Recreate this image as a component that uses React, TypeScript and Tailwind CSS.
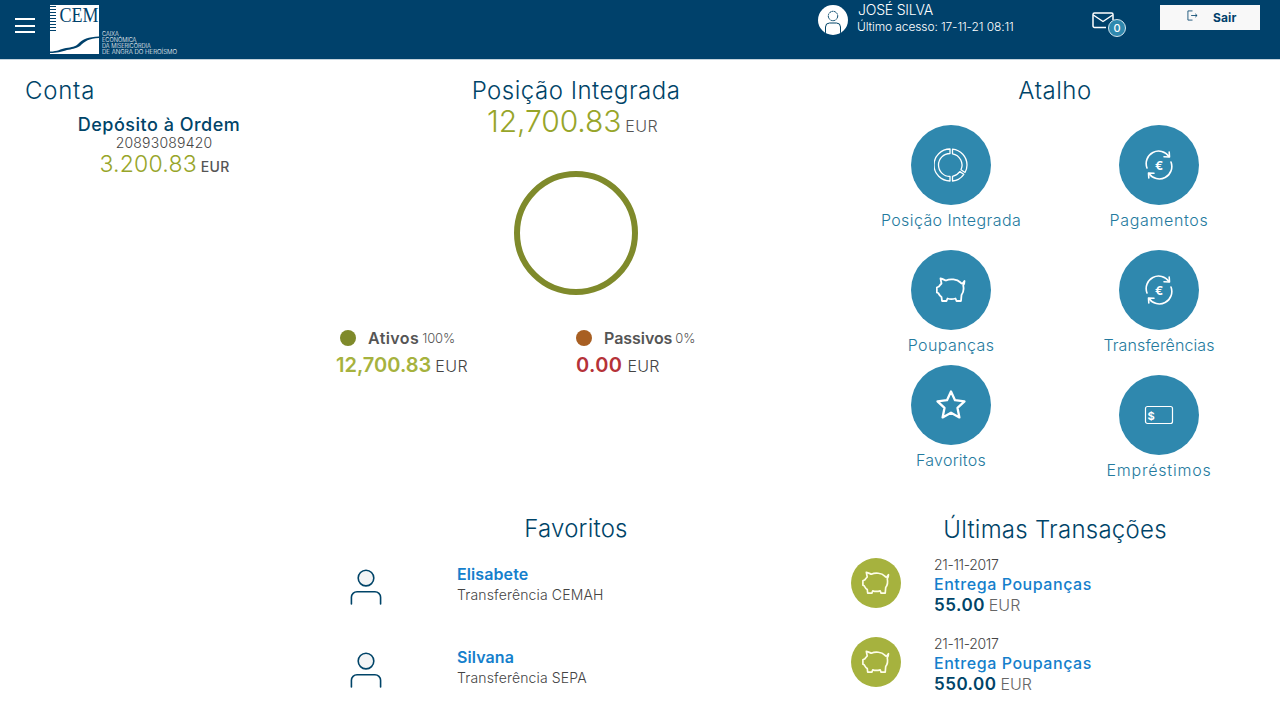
import React from "react";

const Pig = ({ className = "" }: { className?: string }) => (
  <svg viewBox="0 0 30 26" className={className} fill="none" stroke="currentColor" strokeWidth="1.8" strokeLinejoin="round" strokeLinecap="round">
    <path d="M4.5 1.5 C7 2 8.5 3 10 3.5 C14 1.5 21 2 24.5 5.5 C25.5 6.5 26 7 26.5 6.5 C27.5 5.5 28 5 28.5 4 C28.5 6 28 7.5 27.2 8.5 C28 12 27 16 25.5 18 L25 24 L20.5 24 L19.5 21.5 C16.5 22.3 13.5 22.2 11.5 21.5 L10.5 24 L6 24 L5.5 20 C4 19 3 17.5 2.2 16 L0.8 15.5 L0.8 10.5 L3 9.5 C3.6 8.5 4.5 7.5 5.5 6.5 Z" />
  </svg>
);

const Swap = () => (
  <svg viewBox="0 0 30 30" className="w-[30px] h-[30px]" fill="none" stroke="white" strokeWidth="1.6" strokeLinecap="round" strokeLinejoin="round">
    <path d="M3 18 A12.5 12.5 0 0 1 25 6.5" />
    <path d="M20 6.8 L25.5 7 L25.2 2" />
    <path d="M27 12 A12.5 12.5 0 0 1 5 23.5" />
    <path d="M10 23.2 L4.5 23 L4.8 28" />
    <text x="15" y="19.5" textAnchor="middle" fontSize="12" fontWeight="700" fill="white" stroke="none" fontFamily="Inter, sans-serif">€</text>
  </svg>
);

const Donut = () => (
  <svg viewBox="0 0 34 34" className="w-[34px] h-[34px]" fill="none" stroke="white" strokeWidth="1.3" strokeLinejoin="round">
    <path d="M16 1 A16 16 0 0 0 16 33 L16 28.5 A11.5 11.5 0 0 1 16 5.5 Z" />
    <path d="M18.5 1.2 A16 16 0 0 1 33 17 C33 20 32.2 22.5 31 24.5 L27 21.8 A11.5 11.5 0 0 0 18.5 5.8 Z" />
    <path d="M29.8 26.3 A16 16 0 0 1 18.5 33 L18.5 28.3 A11.5 11.5 0 0 0 25.8 23.6 Z" />
  </svg>
);

const Star = () => (
  <svg viewBox="0 0 32 32" className="w-[32px] h-[32px]" fill="none" stroke="white" strokeWidth="2.3" strokeLinejoin="round">
    <path d="M16 2.5 L20 11.2 L29.5 12.4 L22.5 18.9 L24.4 28.4 L16 23.7 L7.6 28.4 L9.5 18.9 L2.5 12.4 L12 11.2 Z" />
  </svg>
);

const Bill = () => (
  <svg viewBox="0 0 30 20" className="w-[30px] h-[20px]" fill="none" stroke="white" strokeWidth="1.2">
    <rect x="1.5" y="1.5" width="27" height="17" rx="2" />
    <text x="7" y="14.5" textAnchor="middle" fontSize="11" fontWeight="700" fill="white" stroke="none" fontFamily="Inter, sans-serif">$</text>
  </svg>
);

const Person = () => (
  <svg viewBox="0 0 34 38" className="w-[32px] h-[36px]" fill="none" stroke="#004468" strokeWidth="1.7">
    <circle cx="17" cy="9.5" r="8.3" fill="#f3f4f5" />
    <path d="M1.5 37 L1.5 30 A6 6 0 0 1 7.5 24 L26.5 24 A6 6 0 0 1 32.5 30 L32.5 37" strokeLinecap="round" />
  </svg>
);

const Shortcut = ({ label, icon, className = "", labelClass = "tracking-[0.4px]" }: { label: string; icon: React.ReactNode; className?: string; labelClass?: string }) => (
  <div className={`flex flex-col items-center ${className}`}>
    <div className="w-20 h-20 rounded-full bg-[#2f88ae] text-white flex items-center justify-center">{icon}</div>
    <div className={`mt-[5px] text-[16px] leading-[20px] font-light text-[#247a9e] whitespace-nowrap ${labelClass}`}>{label}</div>
  </div>
);

const Favorite = ({ name, kind, className = "" }: { name: string; kind: string; className?: string }) => (
  <div className={`flex items-start ${className}`}>
    <div className="ml-[30px] w-[32px] mt-[6px]"><Person /></div>
    <div className="ml-[75px]">
      <div className="text-[16px] leading-[22px] font-semibold text-[#157fcc] tracking-[0.1px]">{name}</div>
      <div className="text-[14px] leading-[20px] font-light text-[#444] tracking-[0.15px]">{kind}</div>
    </div>
  </div>
);

const Tx = ({ value, className = "" }: { value: string; className?: string }) => (
  <div className={`flex items-start ${className}`}>
    <div className="ml-[19px] mt-[5px] w-[50px] h-[50px] rounded-full bg-[#a6b23e] flex items-center justify-center text-[#fdfde8]">
      <Pig className="w-[28px] h-[24px]" />
    </div>
    <div className="ml-[33px] pt-[2px]">
      <div className="text-[14px] leading-[19px] font-light text-[#444] tracking-[-0.35px]">21-11-2017</div>
      <div className="text-[16px] leading-[20px] font-medium text-[#157fcc] tracking-[0.55px]">Entrega Poupanças</div>
      <div className="text-[17px] leading-[22px] text-[#666]"><span className="font-semibold text-[#004468] tracking-[0.5px]">{value}</span><span className="text-[16px] font-light ml-[4px]">EUR</span></div>
    </div>
  </div>
);

export default function App() {
  return (
    <div className="h-[727px] overflow-hidden bg-white font-['Inter',sans-serif] text-[#555]">
      <header className="h-[60px] bg-[#00416b] border-b border-[#c4d3dc] flex items-start text-white">
        <div className="ml-[15px] mt-[18px] w-5 flex flex-col gap-[4.5px]">
          <span className="h-[2px] bg-white" /><span className="h-[2px] bg-white" /><span className="h-[2px] bg-white" />
        </div>
        <svg viewBox="0 0 128 50" className="ml-[15px] mt-[5px] w-[128px] h-[50px]">
          <rect x="0" y="0" width="49" height="49" fill="white" />
          <path d="M0 1.5H6M0 4.5H6M0 7.5H6M0 10.5H6M0 13.5H6M0 16.5H6M0 19.5H6M0 22.5H6M0 25.5H6" stroke="#00416b" strokeWidth="1.2" />
          <text x="9.5" y="17" fontFamily="'Liberation Serif', serif" fontSize="20" fill="#00416b" textLength="39" lengthAdjust="spacingAndGlyphs">CEM</text>
          <path d="M0 46.5 C8 46.5 10 44 16 43 C22 42 25 42 28 39 C33 34 38 32 49 31.5 L49 33 C39 33.5 35 36 30 41 C25 44 22 44 17 45 C11 47 7 48 0 48 Z" fill="#00416b" />
          <g fill="white" fontFamily="Inter, sans-serif" fontSize="5.6" fontWeight="300">
            <text x="52" y="31">CAIXA</text>
            <text x="52" y="36.5">ECONÓMICA</text>
            <text x="52" y="42.5">DA MISERICÓRDIA</text>
            <text x="52" y="48.5" textLength="75" lengthAdjust="spacingAndGlyphs">DE ANGRA DO HEROÍSMO</text>
          </g>
        </svg>
        <div className="ml-[640px] mt-[5px] w-[30px] h-[30px] rounded-full bg-white overflow-hidden">
          <svg viewBox="0 0 30 30" className="w-[30px] h-[30px]" fill="none" stroke="#004468" strokeWidth="1">
            <circle cx="15" cy="11" r="4.7" strokeDasharray="2 0.5" />
            <path d="M7.5 30 L7.5 22 A4 4 0 0 1 11.5 18 L18.5 18 A4 4 0 0 1 22.5 22 L22.5 30" />
          </svg>
        </div>
        <div className="ml-[9px] w-[235px] leading-none">
          <div className="mt-[1px] ml-[1px] text-[14px] leading-[17px] font-light tracking-[-0.2px]">JOSÉ SILVA</div>
          <div className="text-[12px] leading-[17px] font-light tracking-[-0.12px]">Último acesso: 17-11-21 08:11</div>
        </div>
        <div className="relative mt-[12px] w-[22px] h-[17px]">
          <svg viewBox="0 0 22 17" className="w-[22px] h-[17px]" fill="none" stroke="white" strokeWidth="1.5" strokeLinejoin="round">
            <path d="M14 15.5 L2.5 15.5 A1.5 1.5 0 0 1 1 14 L1 2.5 A1.5 1.5 0 0 1 2.5 1 L19.5 1 A1.5 1.5 0 0 1 21 2.5 L21 8" />
            <path d="M1.3 3 L11 9.5 L20.7 3" />
          </svg>
          <div className="absolute left-[16px] top-[7px] w-[18px] h-[18px] rounded-full bg-[#2f88ae] border border-[#d5e6ee] text-[11px] leading-[16px] text-center font-medium">0</div>
        </div>
        <div className="ml-[46px] mt-[5px] w-[100px] h-[25px] bg-[#f8f8f8] flex items-center text-[#00416b]">
          <svg viewBox="0 0 12 12" className="ml-[27px] w-[11px] h-[11px] mb-[4px]" fill="none" stroke="#00416b" strokeWidth="0.9">
            <path d="M6 1 H1 V11 H6" /><path d="M4.5 6 H11 M9 4.2 L11 6 L9 7.8" />
          </svg>
          <span className="ml-[15px] text-[12px] font-bold tracking-[0.1px]">Sair</span>
        </div>
      </header>

      <main className="grid grid-cols-[320px_512px_448px] grid-rows-[456px_auto]">
        <section className="pl-[25px] pt-[17px]">
          <h2 className="text-[24px] leading-[28px] font-light text-[#004468] tracking-[0.75px]">Conta</h2>
          <div className="w-[268px] mt-[9px] text-center">
            <div className="text-[18px] leading-[21px] font-medium text-[#004468] tracking-[0.5px]">Depósito à Ordem</div>
            <div className="pl-[10px] text-[14px] leading-[16px] font-light text-[#444] tracking-[0.2px]">20893089420</div>
            <div className="pl-[11px] text-[23px] leading-[27px] font-light text-[#97a52a] tracking-[0.2px]">3.200.83<span className="ml-[4px] text-[14px] font-medium text-[#555] tracking-[0.3px]">EUR</span></div>
          </div>
        </section>

        <section className="pt-[17px]">
          <h2 className="text-center text-[24px] leading-[28px] font-light text-[#004468] tracking-[0.5px]">Posição Integrada</h2>
          <div className="pr-[7px] text-center mt-[-1px] text-[30px] leading-[34px] font-light text-[#97a52a] tracking-[-0.1px]">12,700.83<span className="ml-[4px] text-[16px] text-[#555] font-light tracking-[0.4px]">EUR</span></div>
          <div className="flex justify-center mt-[28px]">
            <svg viewBox="0 0 124 124" className="w-[124px] h-[124px]">
              <circle cx="62" cy="62" r="59" fill="none" stroke="#7f8a2b" strokeWidth="6" />
            </svg>
          </div>
          <div className="grid grid-cols-[240px_240px] ml-[16px] mt-[31px]">
            <div>
              <div className="flex items-center ml-[4px] h-[24px]">
                <span className="w-4 h-4 rounded-full bg-[#7f8a2b]" />
                <span className="ml-3 text-[16px] font-semibold text-[#555] tracking-[0.4px]">Ativos</span>
                <span className="ml-[3px] text-[13px] font-light text-[#555] tracking-[-0.1px] mt-[2px]">100%</span>
              </div>
              <div className="mt-[2px] text-[20px] leading-[26px] font-semibold text-[#a6b23e]">12,700.83<span className="ml-[4px] text-[16px] font-light text-[#444] tracking-[0.5px]">EUR</span></div>
            </div>
            <div>
              <div className="flex items-center h-[24px]">
                <span className="w-4 h-4 rounded-full bg-[#a85f22]" />
                <span className="ml-3 text-[16px] font-semibold text-[#555] tracking-[-0.05px]">Passivos</span>
                <span className="ml-[3px] text-[13px] font-light text-[#555] tracking-[-0.2px] mt-[2px]">0%</span>
              </div>
              <div className="mt-[2px] text-[20px] leading-[26px] font-semibold text-[#b53238] tracking-[0.4px]">0.00<span className="ml-[5px] text-[16px] font-light text-[#444] tracking-[0.3px]">EUR</span></div>
            </div>
          </div>
        </section>

        <section className="row-span-2 flex">
          <div className="flex flex-col">
            <div className="h-[456px] pt-[17px]">
              <h2 className="w-[446px] text-center text-[24px] leading-[28px] font-light text-[#004468] tracking-[0.5px]">Atalho</h2>
              <div className="flex mt-[20px]">
                <div className="w-[238px] flex flex-col items-center">
                  <Shortcut label="Posição Integrada" icon={<Donut />} />
                  <Shortcut label="Poupanças" className="mt-[20px]" icon={<Pig className="w-[30px] h-[26px]" />} />
                  <Shortcut label="Favoritos" className="mt-[10px]" labelClass="tracking-[0.25px]" icon={<Star />} />
                </div>
                <div className="w-[178px] flex flex-col items-center">
                  <Shortcut label="Pagamentos" labelClass="tracking-[0.65px]" icon={<Swap />} />
                  <Shortcut label="Transferências" className="mt-[20px]" labelClass="tracking-[0.1px]" icon={<Swap />} />
                  <Shortcut label="Empréstimos" className="mt-[20px]" labelClass="tracking-[0.8px]" icon={<Bill />} />
                </div>
              </div>
            </div>
            <h2 className="w-[446px] text-center text-[24px] leading-[28px] font-light text-[#004468] tracking-[0.25px]">Últimas Transações</h2>
            <Tx value="55.00" className="mt-[9px]" />
            <Tx value="550.00" className="mt-[16px]" />
          </div>
        </section>

        <section className="col-start-2">
          <h2 className="text-center text-[24px] leading-[28px] font-light text-[#004468] tracking-[0.2px] -mt-[1px]">Favoritos</h2>
          <Favorite name="Elisabete" kind="Transferência CEMAH" className="mt-[20px]" />
          <Favorite name="Silvana" kind="Transferência SEPA" className="mt-[41px]" />
        </section>
      </main>
    </div>
  );
}
